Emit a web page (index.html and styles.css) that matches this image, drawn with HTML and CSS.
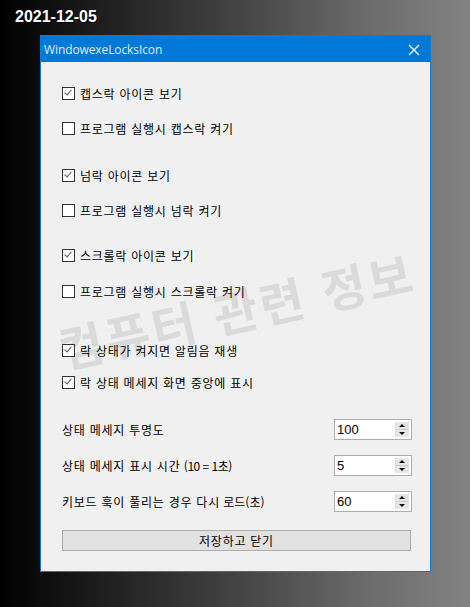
FILE: index.html
```html
<!DOCTYPE html>
<html lang="ko">
<head>
    <meta charset="UTF-8">
    <meta name="viewport" content="width=device-width, initial-scale=1.0">
    <title>WindowexeLocksIcon</title>
    <link rel="stylesheet" href="styles.css">
</head>
<body>
    <div class="date">2021-12-05</div>

    <div class="window">
        <div class="titlebar">
            <span class="title">WindowexeLocksIcon</span>
            <svg class="close" width="12" height="12" viewBox="0 0 12 12">
                <path d="M1 1 L11 11 M11 1 L1 11" stroke="#fff" stroke-width="1.3" fill="none"/>
            </svg>
        </div>

        <div class="content">
            <div class="watermark">컴퓨터 관련 정보</div>

            <label class="row"><span class="box checked"></span>캡스락 아이콘 보기</label>
            <label class="row near"><span class="box"></span>프로그램 실행시 캡스락 켜기</label>

            <label class="row group"><span class="box checked"></span>넘락 아이콘 보기</label>
            <label class="row near"><span class="box"></span>프로그램 실행시 넘락 켜기</label>

            <label class="row group-b"><span class="box checked"></span>스크롤락 아이콘 보기</label>
            <label class="row near-b"><span class="box"></span>프로그램 실행시 스크롤락 켜기</label>

            <label class="row group-c"><span class="box checked"></span>락 상태가 켜지면 알림음 재생</label>
            <label class="row tight"><span class="box checked"></span>락 상태 메세지 화면 중앙에 표시</label>

            <div class="field first">
                <span class="wide">상태 메세지 투명도</span>
                <div class="spin"><span class="spin-value">100</span><span class="spin-btns"><i class="up"></i><i class="down"></i></span></div>
            </div>
            <div class="field">
                <span><span class="wide">상태 메세지 표시 시간</span> <span class="num">(10 = 1초)</span></span>
                <div class="spin"><span class="spin-value">5</span><span class="spin-btns"><i class="up"></i><i class="down"></i></span></div>
            </div>
            <div class="field">
                <span><span class="wide">키보드 훅이 풀리는 경우 다시</span> 로드(초)</span>
                <div class="spin"><span class="spin-value">60</span><span class="spin-btns"><i class="up"></i><i class="down"></i></span></div>
            </div>

            <button class="save">저장하고 닫기</button>
        </div>
    </div>
</body>
</html>
```

FILE: styles.css
```css
body {
    margin: 0;
    width: 470px;
    height: 607px;
    overflow: hidden;
    background: linear-gradient(to right, #000 0%, #1c1c1c 20%, #4a4a4a 55%, #6e6e6e 80%, #828282 100%);
    font-family: "Noto Sans CJK KR", "Noto Sans", sans-serif;
    font-size: 12px;
    color: #000;
}
.date {
    padding: 7px 0 0 15px;
    height: 22px;
    font-family: "Liberation Sans", Arial, sans-serif;
    font-weight: bold;
    font-size: 16px;
    line-height: 20px;
    color: #fff;
    text-shadow: 1px 1px 1px #000;
}
.window {
    margin: 6px 0 0 40px;
    width: 389px;
    height: 535px;
    border: 1px solid #0b7bd6;
    background: #f0f0f0;
    display: flex;
    flex-direction: column;
}
.titlebar {
    height: 26px;
    background: #0078d7;
    display: flex;
    align-items: center;
    justify-content: space-between;
    padding: 0 10px 0 3px;
}
.title {
    font-family: "Open Sans", "Noto Sans", sans-serif;
    font-size: 12px;
    color: #dfeeff;
    letter-spacing: -0.1px;
}
.close {
    margin-top: 1px;
}
.content {
    position: relative;
    padding: 21px 18px 0 21px;
    display: flex;
    flex-direction: column;
}
.watermark {
    position: absolute;
    left: 14px;
    top: 212px;
    font-size: 48px;
    font-weight: bold;
    color: #dadada;
    white-space: nowrap;
    transform: rotate(-12.5deg);
    transform-origin: center;
    letter-spacing: 3px;
    pointer-events: none;
}
.row {
    position: relative;
    height: 20px;
    display: flex;
    align-items: center;
    gap: 5px;
    letter-spacing: 0.75px;
}
.near { margin-top: 15px; }
.group { margin-top: 27px; }
.group-b { margin-top: 25px; }
.near-b { margin-top: 16px; }
.group-c { margin-top: 39px; }
.tight { margin-top: 12px; }
.box {
    width: 11px;
    height: 11px;
    border: 1px solid #333;
    background: #fff;
    position: relative;
    flex-shrink: 0;
}
.box.checked::after {
    content: "";
    position: absolute;
    left: 2px;
    top: 0px;
    width: 3px;
    height: 6px;
    border: solid #555;
    border-width: 0 1.5px 1.5px 0;
    transform: rotate(40deg);
    transform-origin: center;
    margin-left: 1px;
}
.field {
    position: relative;
    height: 20px;
    margin-top: 16px;
    display: flex;
    align-items: center;
    justify-content: space-between;
}
.field.first { margin-top: 27px; }
.wide { letter-spacing: 0.75px; }
.num { letter-spacing: -0.5px; }
.spin {
    width: 76px;
    height: 19px;
    border: 1px solid #adadad;
    background: #fff;
    display: flex;
    align-items: center;
    justify-content: space-between;
}
.spin-value {
    padding-left: 2px;
    font-family: "Liberation Sans Narrow", "Liberation Sans", sans-serif;
    font-size: 13px;
    line-height: 19px;
}
.spin-btns {
    width: 13px;
    height: 15px;
    margin-right: 2px;
    display: flex;
    flex-direction: column;
    background: #e6e6e6;
    border-left: 1px solid #dcdcdc;
}
.spin-btns i {
    flex: 1;
    position: relative;
}
.spin-btns .up { border-bottom: 1px solid #cfcfcf; }
.spin-btns i::after {
    content: "";
    position: absolute;
    left: 3px;
    top: 2px;
    border-left: 3.5px solid transparent;
    border-right: 3.5px solid transparent;
}
.spin-btns .up::after { border-bottom: 3.5px solid #000; }
.spin-btns .down::after { border-top: 3.5px solid #000; top: 2px; }
.save {
    margin-top: 19px;
    width: 349px;
    height: 21px;
    padding: 0;
    border: 1px solid #adadad;
    background: #e1e1e1;
    font-family: "Noto Sans CJK KR", sans-serif;
    font-size: 12px;
    letter-spacing: 0.75px;
    color: #000;
    position: relative;
}
```
